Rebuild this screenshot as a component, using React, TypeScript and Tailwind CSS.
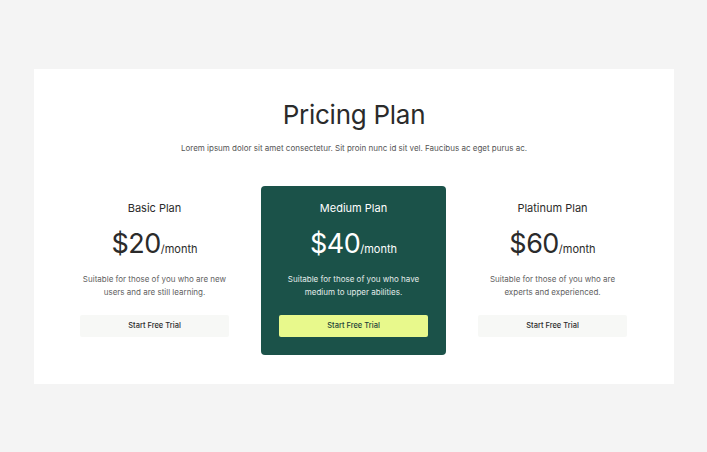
import React from "react";

type Plan = { name: string; price: string; desc: [string, string]; featured?: boolean };

const plans: Plan[] = [
  { name: "Basic Plan", price: "$20", desc: ["Suitable for those of you who are new", "users and are still learning."] },
  { name: "Medium Plan", price: "$40", desc: ["Suitable for those of you who have", "medium to upper abilities."], featured: true },
  { name: "Platinum Plan", price: "$60", desc: ["Suitable for those of you who are", "experts and experienced."] },
];

function Card({ plan }: { plan: Plan }) {
  const f = plan.featured;
  return (
    <div
      className={
        f
          ? "flex flex-col items-center rounded-[4px] bg-[#1b5249] px-[18px] pt-[14px] pb-[18px] text-white"
          : "flex flex-col items-center rounded-[4px] bg-white px-[18px] pt-[14px] pb-[18px] text-[#2b2b2b]"
      }
    >
      <div className="text-[11px] leading-[16px]">{plan.name}</div>
      <div className="mt-[10px] flex items-baseline leading-[35px]">
        <span className="text-[27px] tracking-[-0.02em]">{plan.price}</span>
        <span className="text-[11px]">/month</span>
      </div>
      <div
        className={
          f
            ? "mt-[6px] text-center text-[8px] leading-[13px] text-[#e3ece9]"
            : "mt-[6px] text-center text-[8px] leading-[13px] text-[#5f5f5f]"
        }
      >
        <div>{plan.desc[0]}</div>
        <div>{plan.desc[1]}</div>
      </div>
      <button
        className={
          f
            ? "mt-[16px] flex h-[22px] w-full items-center justify-center rounded-[2px] bg-[#e8f98c] text-[7.5px] font-medium text-[#1b3f39]"
            : "mt-[16px] flex h-[22px] w-full items-center justify-center rounded-[2px] bg-[#f7f8f6] text-[7.5px] font-medium text-[#2b2b2b]"
        }
      >
        Start Free Trial
      </button>
    </div>
  );
}

export default function App() {
  return (
    <div
      className="flex h-[452px] w-[707px] items-start bg-[#f4f4f4] pl-[34px] pt-[69px]"
      style={{ fontFamily: "Inter, 'Noto Sans', sans-serif" }}
    >
      <div className="flex w-[640px] flex-col items-center bg-white px-[28px] pt-[30px] pb-[29px]">
        <h1 className="text-[26px] leading-[32px] tracking-[-0.01em] text-[#2b2b2b]">Pricing Plan</h1>
        <p className="mt-[11px] text-[8px] leading-[12px] text-[#555555]">
          Lorem ipsum dolor sit amet consectetur. Sit proin nunc id sit vel. Faucibus ac eget purus ac.
        </p>
        <div className="mt-[32px] grid w-full grid-cols-[185px_185px_185px] gap-[14px]">
          {plans.map((p) => (
            <Card key={p.name} plan={p} />
          ))}
        </div>
      </div>
    </div>
  );
}
